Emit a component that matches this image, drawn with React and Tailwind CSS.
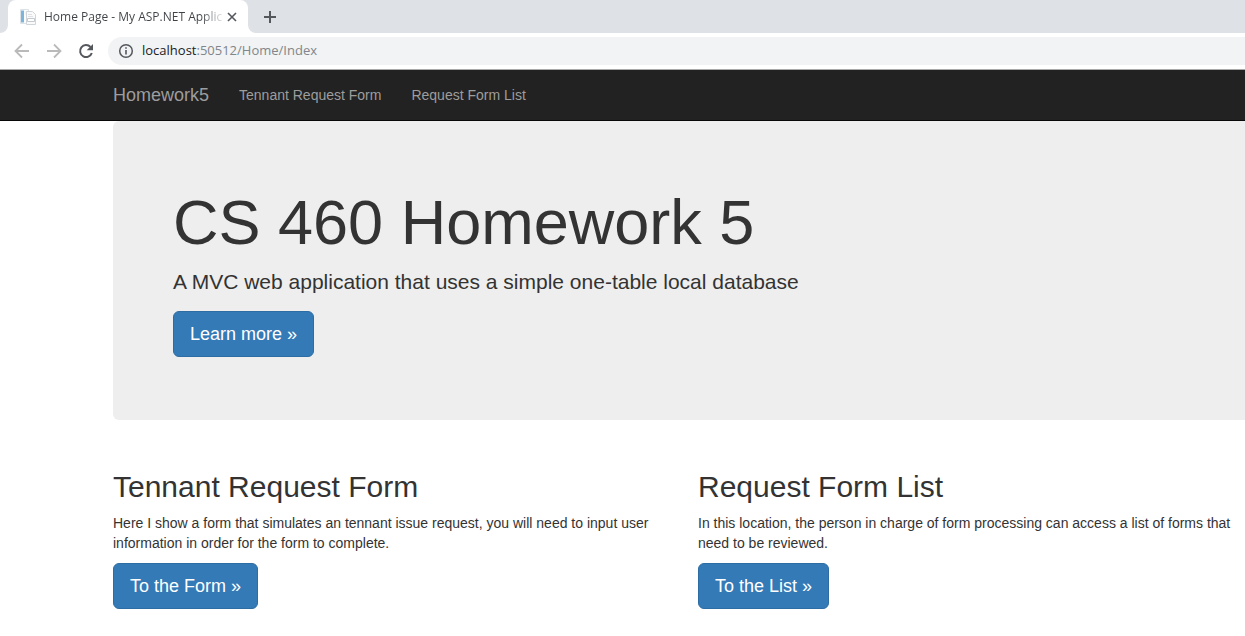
function BrowserTabs() {
  return (
    <div className="flex h-[33px] bg-[#dee1e6]">
      <div className="flex w-2 bg-white">
        <div className="grow rounded-br-lg bg-[#dee1e6]" />
      </div>
      <div className="flex w-60 items-center rounded-t-lg bg-white pl-3 pr-2">
        <svg className="h-4 w-4 shrink-0" viewBox="0 0 16 16" aria-hidden="true">
          <path d="M.5.5h8v14h-8z" fill="#fafbfc" stroke="#dde2e7" />
          <path d="M1 1.500h3v12H1z" fill="#7db4dc" />
          <path d="M5.500 3h2M5.500 5h1" stroke="#dde2e7" />
          <path d="M6.500 2.500h6l3 3v10h-9z" fill="#fafafb" stroke="#d0d5da" />
          <path d="M8 5.500h4M8 7.500h5" stroke="#dde1e5" />
          <path d="M7.500 9.500h7v3h-7z" fill="#fff" stroke="#c3c9cf" />
        </svg>
        <span className="ml-2 shrink-0 whitespace-nowrap bg-linear-to-r from-[#3f4347] from-88% to-[#e4e5e6] bg-clip-text font-['Open_Sans',sans-serif] text-xs text-transparent">
          Home Page - My ASP.NET Applic
        </span>
        <button type="button" aria-label="Close tab" className="ml-auto flex h-4 w-4 shrink-0 items-center justify-center">
          <svg className="h-4 w-4" viewBox="0 0 16 16" fill="none" stroke="#54585c" strokeWidth="1.600">
            <path d="M4 4l8 8M12 4l-8 8" />
          </svg>
        </button>
      </div>
      <div className="flex w-2 bg-white">
        <div className="grow rounded-bl-lg bg-[#dee1e6]" />
      </div>
      <button type="button" aria-label="New tab" className="ml-1 flex w-5 items-center justify-center">
        <svg className="h-4 w-4" viewBox="0 0 16 16" fill="none" stroke="#54585c" strokeWidth="2">
          <path d="M8 2v12M2 8h12" />
        </svg>
      </button>
    </div>
  );
}

function AddressBar() {
  return (
    <div className="flex h-[37px] items-center border-b border-[#a9a9a9] bg-white pl-3">
      <button type="button" aria-label="Back" className="h-5 w-5">
        <svg viewBox="0 0 20 20" fill="none" stroke="#bababa" strokeWidth="1.800">
          <path d="M17 10H4M10 3.500L3.500 10l6.500 6.500" />
        </svg>
      </button>
      <button type="button" aria-label="Forward" className="ml-3 h-5 w-5">
        <svg viewBox="0 0 20 20" fill="none" stroke="#bababa" strokeWidth="1.800">
          <path d="M3 10h13M10 3.500l6.500 6.500-6.500 6.500" />
        </svg>
      </button>
      <button type="button" aria-label="Reload" className="ml-3 h-5 w-5">
        <svg viewBox="0 0 20 20" fill="none">
          <path d="M15.800 12A6 6 0 1 1 14.500 6" stroke="#54585c" strokeWidth="2" />
          <path d="M17 3v6.300h-6.300z" fill="#54585c" />
        </svg>
      </button>
      <div className="ml-3 flex h-7 grow items-center rounded-l-full bg-[#f1f3f4] pl-2.5">
        <svg className="h-4 w-4" viewBox="0 0 16 16" fill="none" stroke="#54585c" aria-hidden="true">
          <circle cx="8" cy="8" r="6.300" strokeWidth="1.500" />
          <path d="M8 7v4.500M8 4.300v1.500" strokeWidth="1.600" />
        </svg>
        <span className="ml-2 font-['Open_Sans',sans-serif] text-[13px] text-[#80868b]">
          <span className="text-[#202124]">localhost</span>:50512/Home/Index
        </span>
      </div>
    </div>
  );
}

function Navbar() {
  return (
    <nav className="flex h-[51px] items-center gap-[30px] border-b border-[#080808] bg-[#222] pl-[113px] text-sm text-[#9d9d9d]">
      <a href="#home" className="text-lg">Homework5</a>
      <a href="#form">Tennant Request Form</a>
      <a href="#list">Request Form List</a>
    </nav>
  );
}

function LinkButton({ href, children }) {
  return (
    <a href={href} className="inline-block rounded-md border border-[#2e6da4] bg-[#337ab7] px-4 py-2 text-lg leading-7 text-white">
      {children}
    </a>
  );
}

function Section({ title, text, href, action }) {
  return (
    <section>
      <h2 className="mb-2.5 text-3xl leading-[33px]">{title}</h2>
      <p className="mb-2.5 text-sm">{text}</p>
      <LinkButton href={href}>{action}</LinkButton>
    </section>
  );
}

export default function App() {
  return (
    <div className="min-h-screen bg-white font-['Liberation_Sans',Arial,sans-serif] text-[#333]">
      <header>
        <BrowserTabs />
        <AddressBar />
        <Navbar />
      </header>
      <main className="pl-[113px]">
        <div className="rounded-l-md bg-[#eee] px-[60px] pb-[63px] pt-[67px]">
          <h1 className="mb-2.5 text-[63px] leading-[69px]">CS 460 Homework 5</h1>
          <p className="mb-[15px] text-[21px] leading-[29px]">
            A MVC web application that uses a simple one-table local database
          </p>
          <div className="flex">
            <LinkButton href="#more">Learn more »</LinkButton>
          </div>
        </div>
        <div className="grid grid-cols-2 gap-[38px] pt-[50px]">
          <Section
            title="Tennant Request Form"
            text="Here I show a form that simulates an tennant issue request, you will need to input user information in order for the form to complete."
            href="#form"
            action="To the Form »"
          />
          <Section
            title="Request Form List"
            text="In this location, the person in charge of form processing can access a list of forms that need to be reviewed."
            href="#list"
            action="To the List »"
          />
        </div>
      </main>
    </div>
  );
}
